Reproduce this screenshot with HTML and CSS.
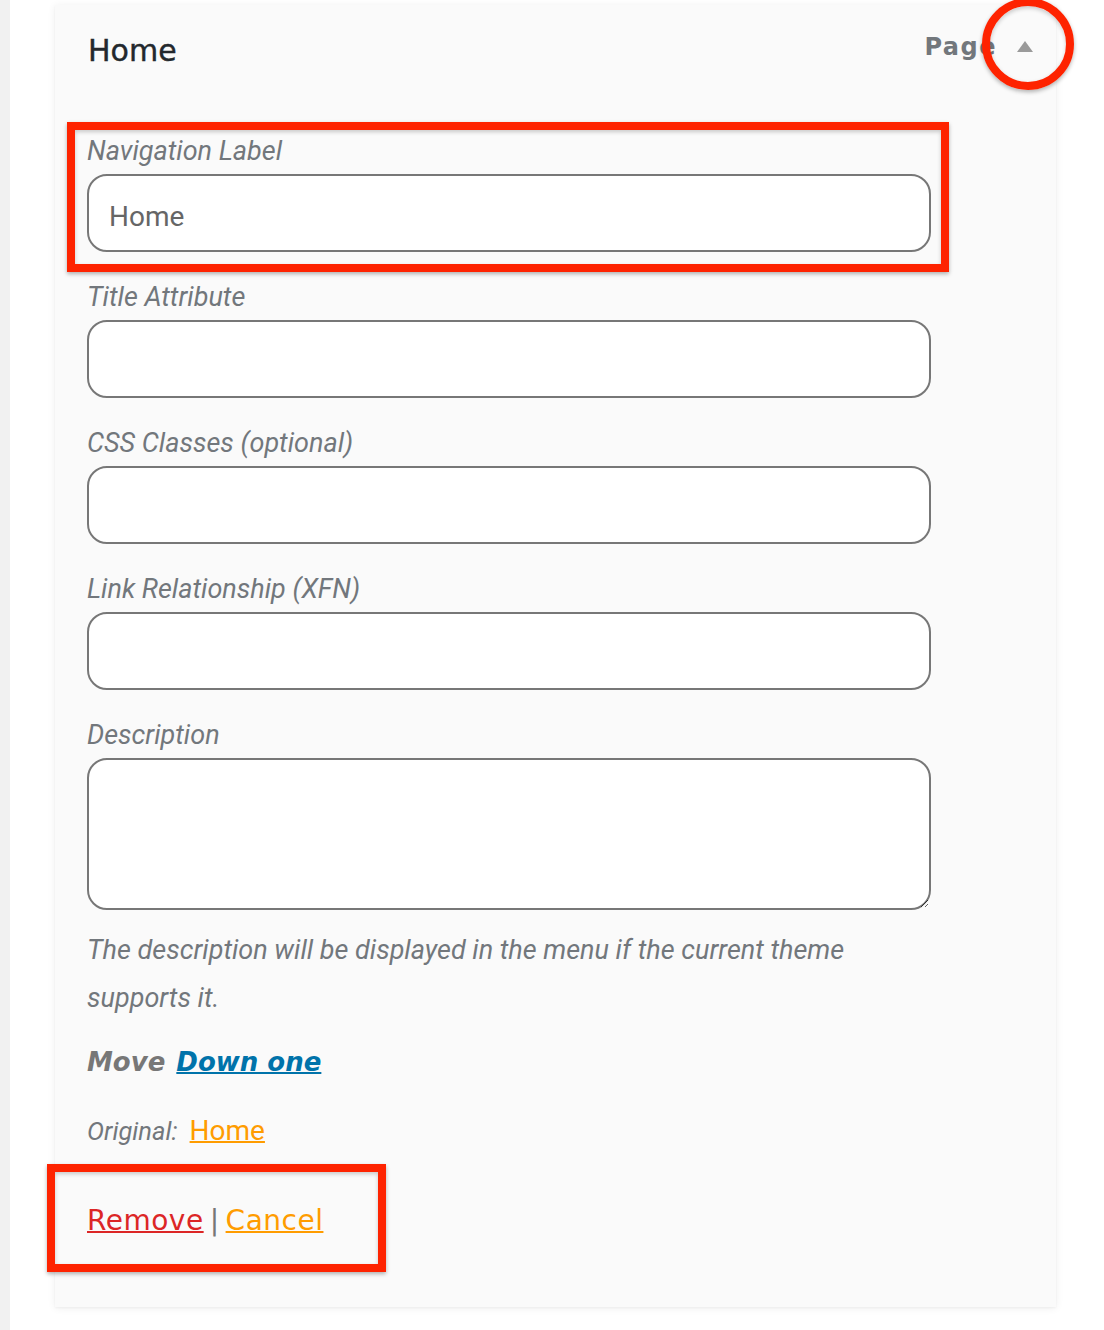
FILE: index.html
```html
<!DOCTYPE html>
<html lang="en">
<head>
<meta charset="utf-8">
<title>Menu item – Home</title>
<link rel="stylesheet" href="styles.css">
</head>
<body>
<div class="screen">
  <div class="rail"></div>
  <main class="stage">
    <section class="item">
      <header class="item-head">
        <h2 class="item-title">Home</h2>
        <div class="item-controls">
          <span class="item-type">Page</span>
          <span class="toggle"><span class="arrow"></span><span class="ring"></span></span>
        </div>
      </header>
      <div class="item-body">
        <div class="field field-marked">
          <label class="field-label" for="nav-label">Navigation Label</label>
          <input class="field-input" id="nav-label" type="text" value="Home">
          <span class="mark mark-field"></span>
        </div>
        <div class="field">
          <label class="field-label" for="title-attr">Title Attribute</label>
          <input class="field-input" id="title-attr" type="text">
        </div>
        <div class="field">
          <label class="field-label" for="css-classes">CSS Classes (optional)</label>
          <input class="field-input" id="css-classes" type="text">
        </div>
        <div class="field">
          <label class="field-label" for="xfn">Link Relationship (XFN)</label>
          <input class="field-input" id="xfn" type="text">
        </div>
        <div class="field field-desc">
          <label class="field-label" for="desc">Description</label>
          <textarea class="field-input field-area" id="desc"></textarea>
        </div>
        <p class="help">The description will be displayed in the menu if the current theme supports it.</p>
        <p class="move"><span class="move-label">Move</span><a class="move-link" href="#">Down one</a></p>
        <p class="original"><span class="original-label">Original:</span><a class="original-link" href="#">Home</a></p>
        <p class="actions"><a class="remove" href="#">Remove</a><span class="sep">|</span><a class="cancel" href="#">Cancel</a><span class="mark mark-actions"></span></p>
      </div>
    </section>
  </main>
</div>
</body>
</html>
```

FILE: styles.css
```css
html, body {
  margin: 0;
  padding: 0;
  background: #ffffff;
}

.screen {
  display: flex;
  min-height: 1330px;
}

.rail {
  width: 10px;
  flex: 0 0 10px;
  background: #f1f1f1;
}

.stage {
  flex: 1;
  padding: 5px 0 0 45px;
}

.item {
  position: relative;
  width: 1001px;
  background: #fafafa;
  box-shadow: 0 1px 8px rgba(0, 0, 0, 0.07), 0 1px 2px rgba(0, 0, 0, 0.04);
}

.item-head {
  display: flex;
  justify-content: space-between;
  align-items: flex-start;
  padding: 28px 23px 0 33px;
}

.item-title {
  margin: 0;
  font-family: "DejaVu Sans", sans-serif;
  font-weight: 400;
  font-size: 30px;
  line-height: 36px;
  color: #23282d;
  -webkit-text-stroke: 0.4px #23282d;
}

.item-controls {
  display: flex;
  align-items: flex-start;
  gap: 20px;
  margin-top: -1px;
}

.item-type {
  font-family: "DejaVu Sans", sans-serif;
  font-weight: 700;
  font-size: 24px;
  line-height: 30px;
  letter-spacing: 1.5px;
  color: #72777c;
}

.toggle {
  position: relative;
  display: block;
  width: 16px;
  height: 11px;
  margin-top: 9px;
}

.arrow {
  display: block;
  width: 0;
  height: 0;
  border-left: 8px solid transparent;
  border-right: 8px solid transparent;
  border-bottom: 11px solid #9a9a9a;
}

.ring {
  position: absolute;
  left: -35px;
  top: -43px;
  width: 92px;
  height: 92px;
  box-sizing: border-box;
  border: 8px solid #fe2300;
  border-radius: 50%;
  box-shadow: 0 2px 4px rgba(0, 0, 0, 0.3), inset 0 2px 4px rgba(0, 0, 0, 0.2);
}

.item-body {
  padding: 67px 125px 68px 32px;
}

.field {
  position: relative;
  margin-bottom: 30px;
}

.field-label {
  display: block;
  margin-bottom: 8px;
  font-family: Roboto, sans-serif;
  font-style: italic;
  font-size: 27px;
  line-height: 30px;
  color: #72777c;
}

.field-input {
  display: block;
  width: 100%;
  height: 78px;
  box-sizing: border-box;
  margin: 0;
  padding: 6px 20px 0;
  border: 2px solid #777777;
  border-radius: 20px;
  background: #ffffff;
  font-family: Roboto, sans-serif;
  font-size: 28px;
  color: #666666;
  outline: none;
}

.field-desc {
  margin-bottom: 16px;
}

.field-area {
  height: 152px;
  padding: 16px 20px;
  resize: vertical;
}

.mark {
  position: absolute;
  box-sizing: border-box;
  border: 8px solid #fe2300;
  box-shadow: 0 2px 4px rgba(0, 0, 0, 0.3), inset 0 2px 4px rgba(0, 0, 0, 0.2);
  pointer-events: none;
}

.mark-field {
  left: -20px;
  right: -18px;
  top: -14px;
  bottom: -20px;
}

.help {
  margin: 0 0 22px;
  font-family: Roboto, sans-serif;
  font-style: italic;
  font-size: 27px;
  line-height: 48px;
  color: #72777c;
}

.move {
  margin: 0;
  font-family: "DejaVu Sans", sans-serif;
  font-weight: 700;
  font-style: oblique;
  font-size: 26px;
  line-height: 36px;
  color: #777777;
}

.move-label {
  margin-right: 11px;
}

.move-link {
  color: #0073aa;
  text-decoration: underline;
  text-decoration-thickness: 2px;
}

.original {
  margin: 33px 0 0;
  font-family: Roboto, sans-serif;
  font-size: 28px;
  line-height: 36px;
}

.original-label {
  margin-right: 12px;
  font-style: italic;
  font-size: 25.5px;
  color: #72777c;
}

.original-link {
  color: #ff9c00;
  text-decoration: underline;
  text-decoration-thickness: 2px;
}

.actions {
  position: relative;
  margin: 54px 0 0;
  font-family: "DejaVu Sans", sans-serif;
  font-size: 28px;
  line-height: 36px;
  letter-spacing: 0.5px;
  color: #777777;
}

.remove {
  color: #dc2626;
  text-decoration: underline;
  text-decoration-thickness: 2px;
}

.sep {
  margin: 0 6px;
  color: #777777;
}

.cancel {
  color: #ff9c00;
  text-decoration: underline;
  text-decoration-thickness: 2px;
}

.mark-actions {
  left: -40px;
  top: -39px;
  width: 339px;
  height: 108px;
}
```
